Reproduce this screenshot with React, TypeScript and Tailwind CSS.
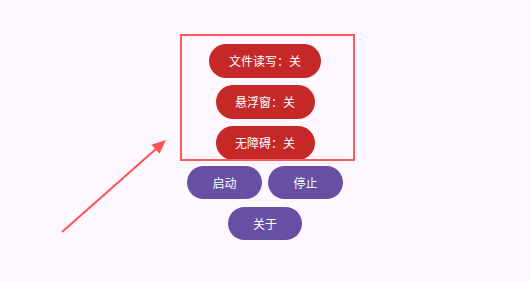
const font = { fontFamily: '"Noto Sans CJK SC", "Noto Sans", sans-serif' };

function Pill({ label, width, color, height }: { label: string; width: string; color: string; height: string }) {
  return (
    <button
      className={`${width} ${height} ${color} rounded-full text-white text-[12px] leading-none flex items-center justify-center`}
      style={font}
    >
      {label}
    </button>
  );
}

export default function App() {
  return (
    <div className="relative w-full h-[281px] bg-[#FEF7FF] overflow-hidden">
      <div className="flex flex-col items-center pt-[44px] pr-[1px]">
        <Pill label="文件读写：关" width="w-[112px]" height="h-[34px]" color="bg-[#C62828]" />
        <div className="h-[7px]" />
        <Pill label="悬浮窗：关" width="w-[99px]" height="h-[34px]" color="bg-[#C62828]" />
        <div className="h-[7px]" />
        <Pill label="无障碍：关" width="w-[99px]" height="h-[34px]" color="bg-[#C62828]" />
        <div className="h-[6px]" />
        <div className="flex gap-[6px]">
          <Pill label="启动" width="w-[75px]" height="h-[33px]" color="bg-[#6750A4]" />
          <Pill label="停止" width="w-[75px]" height="h-[33px]" color="bg-[#6750A4]" />
        </div>
        <div className="h-[8px]" />
        <Pill label="关于" width="w-[74px]" height="h-[33px]" color="bg-[#6750A4]" />
      </div>

      {/* annotation overlay */}
      <div className="absolute left-[180px] top-[34px] w-[175px] h-[127px] border-2 border-[#FF5A5A] pointer-events-none" />
      <svg className="absolute left-0 top-0 pointer-events-none" width="531" height="281">
        <line x1="62" y1="232" x2="157" y2="148" stroke="#FF5252" strokeWidth="2" />
        <polygon points="166,140 151.5,144.8 159.5,153.8" fill="#FF5252" />
      </svg>
    </div>
  );
}
